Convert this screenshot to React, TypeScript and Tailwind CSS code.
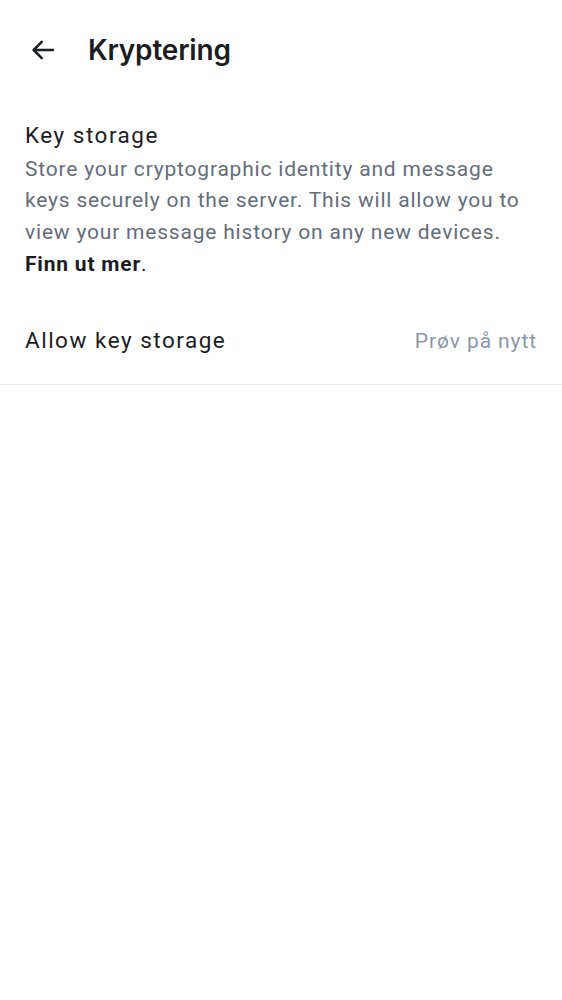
import React from "react";

export default function App() {
  return (
    <div className="w-[562px] h-[1000px] bg-white" style={{ fontFamily: "Roboto, 'Noto Sans', sans-serif" }}>
      <div className="flex items-center h-[100px] pl-[28px]">
        <svg width="30" height="30" viewBox="0 0 24 24" fill="none">
          <path d="M20 12H4.5M11 5.5L4.5 12L11 18.5" stroke="#1b1d22" strokeWidth="2" strokeLinecap="round" strokeLinejoin="round" />
        </svg>
        <h1 className="ml-[30px] text-[28px] font-semibold text-[#1b1d22] tracking-[-0.2px]" style={{ fontFamily: "Inter, sans-serif" }}>
          Kryptering
        </h1>
      </div>
      <div className="px-[25px] pt-[18px]">
        <div className="text-[22.5px] leading-[34px] tracking-[1.5px] text-[#1b1d22]">Key storage</div>
        <p className="text-[21px] leading-[31.7px] tracking-[0.8px] text-[#656d77] mt-[1.5px]">
          Store your cryptographic identity and message keys securely on the server. This will allow you to view your message history on any new devices.{" "}
          <span className="font-bold text-[#1b1d22] tracking-[0.8px]">Finn ut mer</span>
          <span className="text-[#1b1d22]">.</span>
        </p>
      </div>
      <div className="flex items-center justify-between px-[25px] h-[86px] mt-[19px] border-b border-[#e9ebee]">
        <span className="text-[22.5px] tracking-[1.5px] text-[#1b1d22] mb-[1px]">Allow key storage</span>
        <span className="text-[21px] tracking-[0.9px] text-[#8d97a5] mb-[1px]">Prøv på nytt</span>
      </div>
    </div>
  );
}
